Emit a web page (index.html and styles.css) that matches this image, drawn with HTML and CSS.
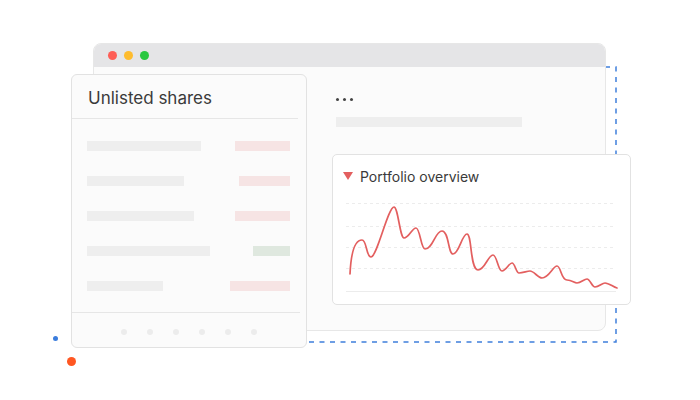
FILE: index.html
```html
<!DOCTYPE html>
<html>
<head>
  <title>Unlisted shares</title>
  <link rel="stylesheet" href="styles.css">
</head>
<body>
  <div class="scene">
    <!-- dashed outline behind the window -->
    <svg class="frame" width="518" height="278" viewBox="0 0 518 278">
      <rect x="1" y="1" width="515" height="275" fill="none" stroke="#3f7fdc" stroke-width="1.5" stroke-dasharray="5 5.5"/>
    </svg>

    <!-- browser window -->
    <div class="window">
      <div class="titlebar">
        <span class="light red"></span>
        <span class="light yellow"></span>
        <span class="light green"></span>
      </div>
      <div class="window-body">
        <div class="more"><span></span><span></span><span></span></div>
        <div class="bar grey wide"></div>
      </div>
    </div>

    <!-- shares list card -->
    <div class="card shares">
      <div class="card-head">Unlisted shares</div>
      <div class="rows">
        <div class="row"><div class="bar grey" style="width:114px"></div><div class="bar red" style="width:55px"></div></div>
        <div class="row"><div class="bar grey" style="width:97px"></div><div class="bar red" style="width:51px"></div></div>
        <div class="row"><div class="bar grey" style="width:107px"></div><div class="bar red" style="width:55px"></div></div>
        <div class="row"><div class="bar grey" style="width:123px"></div><div class="bar green" style="width:37px"></div></div>
        <div class="row"><div class="bar grey" style="width:76px"></div><div class="bar red" style="width:60px"></div></div>
      </div>
      <div class="card-foot">
        <span></span><span></span><span></span><span></span><span></span><span></span>
      </div>
    </div>

    <!-- portfolio chart card -->
    <div class="card portfolio">
      <div class="portfolio-head">
        <span class="down"></span>
        Portfolio overview
      </div>
      <svg class="chart" width="272" height="98" viewBox="0 0 272 98">
        <g stroke="#ececec" stroke-width="1" stroke-dasharray="3 3">
          <line x1="0" y1="8.5" x2="270" y2="8.5"/>
          <line x1="0" y1="31.5" x2="270" y2="31.5"/>
          <line x1="0" y1="52.5" x2="270" y2="52.5"/>
          <line x1="0" y1="73.5" x2="270" y2="73.5"/>
        </g>
        <line x1="0" y1="96.5" x2="270" y2="96.5" stroke="#ececec" stroke-width="1"/>
        <path fill="none" stroke="#e35f5f" stroke-width="1.7" stroke-linecap="round" d="M4 79
          C5 58, 9 45, 16 45
          C21 45, 20 62, 25 62
          C31 62, 42 12, 48 12
          C52 12, 54 43, 58 43
          C63 43, 66 33, 70 33
          C74 33, 75 54, 79 54
          C87 54, 89 36, 96 36
          C103 36, 102 59, 107 59
          C113 59, 116 39, 121 39
          C126 39, 124 75, 132 75
          C139 75, 142 60, 147 60
          C151 60, 152 76, 156 76
          C160 76, 163 68, 166 68
          C169 68, 170 78, 173 78
          C177 78, 181 76, 184 76
          C188 76, 192 83, 196 83
          C203 83, 207 71, 211 71
          C215 71, 215 85, 221 85
          C226 85, 228 88, 231 88
          C235 88, 238 84, 241 84
          C244 84, 246 92, 249 92
          C253 92, 256 88, 259 88
          C263 88, 267 92, 271 93"/>
      </svg>
    </div>

    <span class="blip blue"></span>
    <span class="blip orange"></span>
  </div>
</body>
</html>
```

FILE: styles.css
```css
body {
  margin: 0;
  background: #fff;
  font-family: Inter, "Noto Sans", sans-serif;
  color: #333;
}

.scene {
  position: relative;
  width: 700px;
  height: 400px;
  overflow: hidden;
}

/* dashed outline */
.frame {
  position: absolute;
  left: 100px;
  top: 66px;
}

/* Browser window */
.window {
  position: absolute;
  left: 93px;
  top: 43px;
  width: 513px;
  height: 288px;
  box-sizing: border-box;
  border: 1px solid #e7e7e7;
  border-radius: 8px;
  background: #fbfbfb;
  overflow: hidden;
}

.titlebar {
  display: flex;
  align-items: center;
  gap: 7px;
  height: 23px;
  padding-left: 14px;
  background: #e5e5e7;
}

.light {
  width: 9px;
  height: 9px;
  border-radius: 50%;
}
.light.red { background: #fe5f57; }
.light.yellow { background: #febc2e; }
.light.green { background: #29c840; }

.window-body {
  padding: 31px 0 0 242px;
}

.more {
  display: flex;
  gap: 4px;
  height: 3px;
  margin-bottom: 16px;
}
.more span {
  width: 3px;
  height: 3px;
  border-radius: 50%;
  background: #444;
}

/* placeholder bars */
.bar {
  height: 10px;
}
.bar.grey { background: #eeeeee; }
.bar.red { background: #f6e4e4; }
.bar.green { background: #dfe8df; }
.bar.wide { width: 186px; }

/* Cards */
.card {
  position: absolute;
  box-sizing: border-box;
  border: 1px solid #e2e2e2;
  border-radius: 6px;
}

.shares {
  left: 71px;
  top: 74px;
  width: 236px;
  height: 274px;
  background: #fbfbfb;
  display: flex;
  flex-direction: column;
}

.card-head {
  height: 43px;
  margin-right: 8px;
  padding-left: 16px;
  border-bottom: 1px solid #e6e6e6;
  font-size: 17px;
  line-height: 47px;
  color: #3a3a3a;
}

.rows {
  display: flex;
  flex-direction: column;
  gap: 25px;
  padding: 22px 16px 0 15px;
  height: 171px;
}

.row {
  display: flex;
  justify-content: space-between;
}

.card-foot {
  display: flex;
  justify-content: center;
  gap: 20px;
  margin-right: 6px;
  padding: 16px 0 0 6px;
  border-top: 1px solid #e6e6e6;
  flex: 1;
}
.card-foot span {
  width: 6px;
  height: 6px;
  border-radius: 50%;
  background: #ececec;
}

.portfolio {
  left: 332px;
  top: 154px;
  width: 299px;
  height: 151px;
  border-radius: 5px;
  background: #fff;
}

.portfolio-head {
  display: flex;
  align-items: center;
  gap: 7px;
  padding: 11px 0 0 10px;
  height: 20px;
  font-size: 14px;
  color: #3a3a3a;
}

.down {
  width: 0;
  height: 0;
  border-left: 5px solid transparent;
  border-right: 5px solid transparent;
  border-top: 8px solid #e35f5f;
}

.chart {
  display: block;
  margin: 9px 0 0 13px;
}

/* small decorative dots */
.blip {
  position: absolute;
  border-radius: 50%;
}
.blip.blue {
  left: 53px;
  top: 336px;
  width: 5px;
  height: 5px;
  background: #3b7ddd;
}
.blip.orange {
  left: 67px;
  top: 357px;
  width: 9px;
  height: 9px;
  background: #ff5722;
}
```
